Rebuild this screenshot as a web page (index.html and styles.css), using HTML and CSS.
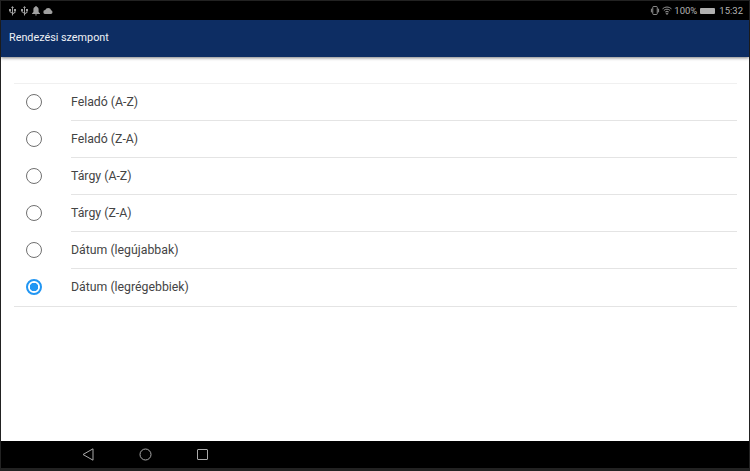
FILE: index.html
```html
<!DOCTYPE html>
<html lang="hu">
<head>
  <meta charset="UTF-8" />
  <title>Rendezési szempont</title>
  <link rel="stylesheet" href="styles.css">
</head>
<body>
  <div class="screen">
    <!-- Status bar -->
    <div class="status-bar">
      <div class="status-group">
        <svg class="st-icon" width="9" height="10" viewBox="0 0 9 10"><path d="M4.500 0 6 2H5v5l1.500-1V5H6V3h2v2h-.5v1.500L5 8.200V9a.5.500 0 0 1-1 0V7.500L1.500 6V5H1V3h2v2h-.5v.5L4 6.500V2H3z"/></svg>
        <svg class="st-icon" width="9" height="10" viewBox="0 0 9 10"><path d="M4.500 0 6 2H5v5l1.500-1V5H6V3h2v2h-.5v1.500L5 8.200V9a.5.500 0 0 1-1 0V7.500L1.500 6V5H1V3h2v2h-.5v.5L4 6.500V2H3z"/></svg>
        <svg class="st-icon" width="8" height="10" viewBox="0 0 8 10"><path d="M4 0a.8.800 0 0 1 .8.800C6 1.200 6.600 2.200 6.600 3.500V6L8 7.500V8H0v-.5L1.400 6V3.500c0-1.300.6-2.300 1.800-2.700A.8.800 0 0 1 4 0zM3 8.600h2a1 1 0 0 1-2 0z"/></svg>
        <svg class="st-icon" width="10" height="8" viewBox="0 0 10 8"><path d="M2.500 7a2 2 0 0 1-.3-4A3.200 3.200 0 0 1 5.200 1a3.200 3.200 0 0 1 3 2.200A2 2 0 0 1 8 7z"/></svg>
      </div>
      <div class="status-group status-right">
        <svg class="st-line" width="10" height="9" viewBox="0 0 11 10"><rect x="3" y=".5" width="5" height="9" rx="1"/><path d="M1.500 3v4M9.500 3v4"/></svg>
        <svg class="st-line" width="10" height="9" viewBox="0 0 11 10"><path d="M.5 3.200a7 7 0 0 1 10 0M2 5a5 5 0 0 1 7 0M3.500 6.700a3 3 0 0 1 4 0M5.500 9.500l-1-1.200a1.500 1.500 0 0 1 2 0z"/></svg>
        <span class="st-text">100%</span>
        <div class="battery"></div>
        <span class="st-text st-time">15:32</span>
      </div>
    </div>
    <!-- App bar -->
    <header class="app-bar">Rendezési szempont</header>
    <!-- Sort options -->
    <main class="content">
      <ul class="options">
        <li class="option"><span class="radio"></span><span class="label">Feladó (A-Z)</span></li>
        <li class="option"><span class="radio"></span><span class="label">Feladó (Z-A)</span></li>
        <li class="option"><span class="radio"></span><span class="label">Tárgy (A-Z)</span></li>
        <li class="option"><span class="radio"></span><span class="label">Tárgy (Z-A)</span></li>
        <li class="option"><span class="radio"></span><span class="label">Dátum (legújabbak)</span></li>
        <li class="option"><span class="radio checked"></span><span class="label">Dátum (legrégebbiek)</span></li>
      </ul>
    </main>
    <!-- Navigation bar -->
    <nav class="nav-bar">
      <svg class="nav-icon" width="12" height="13" viewBox="0 0 12 13"><path d="M11 .8v11.400L1 6.500z"/></svg>
      <svg class="nav-icon" width="13" height="13" viewBox="0 0 13 13"><circle cx="6.500" cy="6.500" r="5.500"/></svg>
      <svg class="nav-icon" width="11" height="11" viewBox="0 0 11 11"><rect x=".5" y=".5" width="10" height="10" rx=".5"/></svg>
    </nav>
  </div>
</body>
</html>
```

FILE: styles.css
```css
html, body {
  margin: 0;
  padding: 0;
  height: 100%;
}
body {
  font-family: Roboto, "Liberation Sans", sans-serif;
  background: #222;
  overflow: hidden;
}
.screen {
  box-sizing: border-box;
  width: 750px;
  height: 471px;
  padding: 1px 1px 3px 1px;
  display: flex;
  flex-direction: column;
}
/* Status bar */
.status-bar {
  flex: 0 0 19px;
  background: #000;
  display: flex;
  justify-content: space-between;
  align-items: center;
  padding: 0 6px 0 7px;
}
.status-group {
  display: flex;
  align-items: center;
  gap: 3px;
}
.status-right {
  gap: 2px;
}
.st-icon {
  fill: #a0a0a0;
}
.st-line {
  fill: none;
  stroke: #a0a0a0;
  stroke-width: 1;
}
.st-text {
  color: #b4b4b4;
  font-size: 9.500px;
}
.st-time {
  margin-left: 2px;
}
.battery {
  width: 15px;
  height: 6px;
  background: #b0b0b0;
  margin-left: 1px;
  border-radius: 1px;
}
/* App bar */
.app-bar {
  flex: 0 0 37px;
  background: #0d2d63;
  color: #eef1f6;
  font-size: 10.800px;
  line-height: 36px;
  padding-left: 8px;
  box-shadow: 0 1px 3px rgba(0, 0, 0, 0.5);
  z-index: 1;
}
/* Sort options */
.content {
  flex: 1;
  background: #fff;
  padding: 26px 12px 0 13px;
}
.options {
  list-style: none;
  margin: 0;
  padding: 0;
  border-top: 1px solid #f0f0f0;
}
.option {
  height: 37px;
  display: flex;
  align-items: center;
}
.radio {
  box-sizing: border-box;
  flex: none;
  width: 16px;
  height: 16px;
  margin: 0 29px 2px 12px;
  border: 1.500px solid #707070;
  border-radius: 50%;
}
.radio.checked {
  border: 2px solid #2196f3;
  background: radial-gradient(circle, #2196f3 0 4px, #fff 4.500px);
}
.label {
  box-sizing: border-box;
  flex: 1;
  height: 100%;
  line-height: 37px;
  font-size: 12.300px;
  color: #444;
  border-bottom: 1px solid #e4e4e4;
}
.option:nth-child(-n+3) .label {
  line-height: 36px;
}
.option:last-child {
  border-bottom: 1px solid #e4e4e4;
}
.option:last-child .label {
  border-bottom: none;
}
/* Navigation bar */
.nav-bar {
  flex: 0 0 27px;
  background: #000;
  display: flex;
  align-items: center;
  padding-left: 81px;
  gap: 45px;
}
.nav-icon {
  fill: none;
  stroke: #aaa;
  stroke-width: 1;
}
```
